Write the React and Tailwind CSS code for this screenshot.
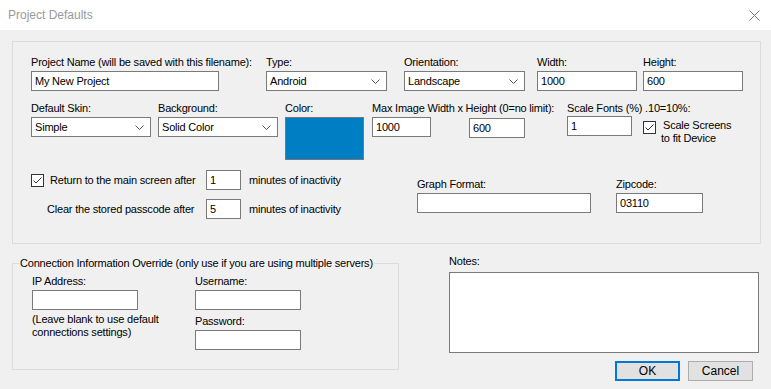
import React from 'react';

const font = { fontFamily: '"Liberation Sans", Arial, sans-serif' };

function Box({ className = '', children }) {
  return (
    <div className={`h-[20px] border border-[#7a7a7a] bg-white pl-[3px] leading-[18px] text-black ${className}`}>
      {children}
    </div>
  );
}

function Select({ className = '', children }) {
  return (
    <div className={`flex h-[20px] items-center justify-between border border-[#7a7a7a] bg-white pl-[3px] pr-[6px] text-black ${className}`}>
      <span>{children}</span>
      <svg width="9" height="5" viewBox="0 0 9 5">
        <polyline points="0.5,0.5 4.5,4.5 8.5,0.5" fill="none" stroke="#555" strokeWidth="1" />
      </svg>
    </div>
  );
}

function Check() {
  return (
    <svg width="13" height="13" viewBox="0 0 13 13" className="shrink-0">
      <rect x="0.5" y="0.5" width="12" height="12" fill="#fff" stroke="#333" />
      <polyline points="2.5,6.5 5,9 10.5,3.5" fill="none" stroke="#333" strokeWidth="1" />
    </svg>
  );
}

function Label({ children, className = '' }) {
  return <div className={`h-[16px] whitespace-nowrap leading-[16px] ${className}`}>{children}</div>;
}

export default function App() {
  return (
    <div className="h-[389px] w-[771px] overflow-hidden bg-[#f0f0f0] text-[11px] tracking-[-0.2px] text-black" style={font}>
      {/* title bar */}
      <div className="flex h-[30px] items-center justify-between bg-white pl-[8px] pr-[11px]">
        <span className="text-[12px] tracking-normal text-[#999]">Project Defaults</span>
        <svg width="11" height="11" viewBox="0 0 11 11">
          <path d="M0.5 0.5 L10.5 10.5 M10.5 0.5 L0.5 10.5" stroke="#777" strokeWidth="1" />
        </svg>
      </div>

      {/* main group */}
      <div className="ml-[12px] mt-[11px] h-[203px] w-[749px] border border-[#dcdcdc] pl-[18px] pt-[12px]">
        {/* row 1 */}
        <div className="flex">
          <div className="w-[188px]">
            <Label>Project Name (will be saved with this filename):</Label>
            <Box className="mt-[1px]">My New Project</Box>
          </div>
          <div className="ml-[47px] w-[121px]">
            <Label>Type:</Label>
            <Select className="mt-[1px]">Android</Select>
          </div>
          <div className="ml-[17px] w-[121px]">
            <Label>Orientation:</Label>
            <Select className="mt-[1px]">Landscape</Select>
          </div>
          <div className="ml-[12px] w-[100px]">
            <Label>Width:</Label>
            <Box className="mt-[1px]">1000</Box>
          </div>
          <div className="ml-[6px] w-[100px]">
            <Label>Height:</Label>
            <Box className="mt-[1px]">600</Box>
          </div>
        </div>

        {/* row 2 */}
        <div className="mt-[9px] flex items-start">
          <div className="w-[120px]">
            <Label>Default Skin:</Label>
            <Select className="mt-[1px]">Simple</Select>
          </div>
          <div className="ml-[7px] w-[120px]">
            <Label>Background:</Label>
            <Select className="mt-[1px]">Solid Color</Select>
          </div>
          <div className="ml-[7px] w-[79px]">
            <Label>Color:</Label>
            <div className="mt-[1px] h-[43px] border border-[#777] bg-[#007ec3]" />
          </div>
          <div className="ml-[8px] w-[153px]">
            <Label>Max Image Width x Height (0=no limit):</Label>
            <div className="mt-[1px] flex justify-between">
              <Box className="w-[59px]">1000</Box>
              <Box className="mt-[1px] w-[56px]">600</Box>
            </div>
          </div>
          <div className="ml-[42px] w-[65px]">
            <Label>Scale Fonts (%) .10=10%:</Label>
            <Box className="mt-[0px]">1</Box>
          </div>
          <div className="ml-[11px] flex pt-[21px]">
            <Check />
            <div className="-mt-[2px] ml-[7px] leading-[13px]">
              <div>Scale Screens</div>
              <div className="-ml-[2px]">to fit Device</div>
            </div>
          </div>
        </div>

        {/* row 3 */}
        <div className="mt-[10px] flex items-start">
          <div className="w-[386px]">
            <div className="flex h-[20px] items-center">
              <div className="flex w-[175px] items-center">
                <Check />
                <span className="ml-[6px]">Return to the main screen after</span>
              </div>
              <Box className="w-[35px]">1</Box>
              <span className="ml-[8px]">minutes of inactivity</span>
            </div>
            <div className="mt-[9px] flex h-[20px] items-center">
              <div className="w-[175px] pl-[16px]">Clear the stored passcode after</div>
              <Box className="w-[35px]">5</Box>
              <span className="ml-[8px]">minutes of inactivity</span>
            </div>
          </div>
          <div className="w-[174px] pt-[6px]">
            <Label>Graph Format:</Label>
            <Box className="mt-[1px]" />
          </div>
          <div className="ml-[25px] w-[87px] pt-[6px]">
            <Label>Zipcode:</Label>
            <Box className="mt-[1px]">03110</Box>
          </div>
        </div>
      </div>

      {/* bottom */}
      <div className="flex items-start pl-[12px]">
        <fieldset className="mt-[12px] h-[114px] w-[387px] border border-[#dcdcdc] pl-[19px]">
          <legend className="-ml-[13px] px-[1px] leading-[14px]">
            Connection Information Override (only use if you are using multiple servers)
          </legend>
          <div className="mt-[3px] flex">
            <div className="w-[106px]">
              <Label>IP Address:</Label>
              <Box className="mt-[1px]" />
              <div className="mt-[3px] whitespace-nowrap leading-[13px]">
                <div>(Leave blank to use default</div>
                <div>connections settings)</div>
              </div>
            </div>
            <div className="ml-[57px] w-[106px]">
              <Label>Username:</Label>
              <Box className="mt-[1px]" />
              <Label className="mt-[3px]">Password:</Label>
              <Box className="mt-[1px]" />
            </div>
          </div>
        </fieldset>
        <div className="ml-[50px] mt-[9px] w-[310px]">
          <Label>Notes:</Label>
          <div className="mt-[3px] h-[81px] border border-[#7a7a7a] bg-white" />
          <div className="mt-[8px] flex justify-end gap-[8px] pr-[6px]">
            <div className="flex h-[20px] w-[65px] items-center justify-center border-2 border-[#0078d7] bg-[#e1e1e1] text-[12px] tracking-normal">
              OK
            </div>
            <div className="flex h-[20px] w-[65px] items-center justify-center border border-[#adadad] bg-[#e1e1e1] text-[12px] tracking-normal">
              Cancel
            </div>
          </div>
        </div>
      </div>
    </div>
  );
}
